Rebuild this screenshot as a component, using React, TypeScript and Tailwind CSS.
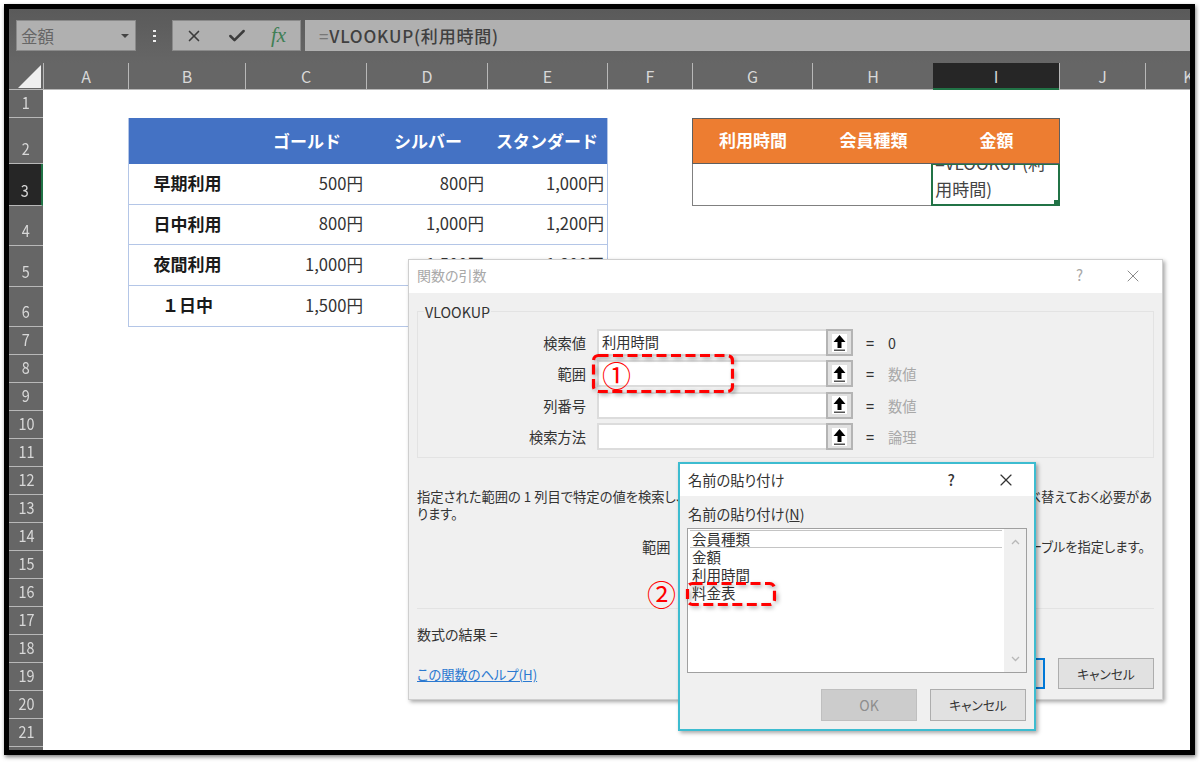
import { X, Check } from "lucide-react"

const jp = `font-['Noto_Sans_CJK_JP','Noto_Sans',sans-serif]`

const columns = [
  { name: "A", width: "w-[85px]" },
  { name: "B", width: "w-[117px]" },
  { name: "C", width: "w-[121px]" },
  { name: "D", width: "w-[121px]" },
  { name: "E", width: "w-[120px]" },
  { name: "F", width: "w-[85px]" },
  { name: "G", width: "w-[120px]" },
  { name: "H", width: "w-[121px]" },
  { name: "I", width: "w-[126px]" },
  { name: "J", width: "w-[86px]" },
  { name: "K", width: "w-[86px]" },
]

const rowHeights = [
  "h-[28px]", "h-[46px]", "h-[42px]", "h-[40px]", "h-[41px]", "h-[40px]",
  "h-[28px]", "h-[28px]", "h-[28px]", "h-[28px]", "h-[28px]", "h-[28px]", "h-[28px]", "h-[28px]",
  "h-[28px]", "h-[28px]", "h-[28px]", "h-[28px]", "h-[28px]", "h-[28px]", "h-[28px]", "h-[5px]",
]

const prices = [
  { label: "早期利用", values: ["500円", "800円", "1,000円"], height: "h-[41px]" },
  { label: "日中利用", values: ["800円", "1,000円", "1,200円"], height: "h-[40px]" },
  { label: "夜間利用", values: ["1,000円", "1,500円", "1,800円"], height: "h-[41px]" },
  { label: "１日中", values: ["1,500円", "1,800円", "2,000円"], height: "h-[40px]" },
]

const args = [
  { label: "検索値", value: "利用時間", result: "0", dim: false },
  { label: "範囲", value: "", result: "数値", dim: true },
  { label: "列番号", value: "", result: "数値", dim: true },
  { label: "検索方法", value: "", result: "論理", dim: true },
]

function RefButton() {
  return (
    <div className="flex h-[27px] w-[27px] shrink-0 items-center justify-center border-2 border-[#b4b4b4] bg-[#e1e1e1]">
      <svg width="15" height="18" viewBox="0 0 15 18">
        <rect width="15" height="18" fill="#fff" />
        <path d="M7.5 1 L13.5 8 H9.5 V14 H5.5 V8 H1.5 Z" fill="#000" />
        <rect x="2" y="15.5" width="11" height="1.5" fill="#555" />
      </svg>
    </div>
  )
}

function Callout({ className, width, height }: { className: string; width: number; height: number }) {
  return (
    <svg
      width={width}
      height={height}
      viewBox={`0 0 ${width} ${height}`}
      className={`absolute overflow-visible drop-shadow-[2px_2px_2px_rgba(0,0,0,0.35)] ${className}`}
    >
      <rect x="1.5" y="1.5" width={width - 3} height={height - 3} rx="5" fill="none" stroke="#ff0000" strokeWidth="3.2" strokeDasharray="10 4.5" />
    </svg>
  )
}

function FormulaBar() {
  return (
    <div className="flex h-[54px] shrink-0 items-start bg-gradient-to-b from-[#5a5a5a] to-[#666666] pt-[11px] pl-[7px]">
      <div className="flex h-[31px] w-[120px] items-center justify-between border border-[#8a8a8a] bg-[#b0b0b0] pt-px pr-[4px] pl-[4px] text-[16.5px] text-[#666666]">
        金額
        <span className="mr-[2px] h-0 w-0 border-x-[4.5px] border-t-[4.5px] border-x-transparent border-t-[#444444]" />
      </div>
      <div className="flex h-[31px] w-[36px] flex-col items-center justify-center gap-[3px]">
        <span className="h-[2px] w-[3px] bg-[#eeeeee]" />
        <span className="h-[2px] w-[3px] bg-[#eeeeee]" />
        <span className="h-[2px] w-[3px] bg-[#eeeeee]" />
      </div>
      <div className="flex h-[31px] w-[129px] items-center border border-[#8a8a8a] bg-[#b0b0b0] pl-[12px]">
        <X size={18} strokeWidth={2.2} className="text-[#3c3c3c]" />
        <Check size={20} strokeWidth={3} className="ml-[24px] text-[#3c3c3c]" />
        <span className="ml-[24px] font-['Liberation_Serif',serif] text-[21px] text-[#3f7f55] italic">fx</span>
      </div>
      <div className="ml-[4px] flex h-[31px] flex-1 items-center bg-[#b0b0b0] pl-[14px] text-[17px] font-medium tracking-[0.8px] text-[#404040]">
        <span className="font-normal text-[#777777]">=</span>VLOOKUP(利用時間)
      </div>
    </div>
  )
}

function ColumnHeaders() {
  return (
    <div className="flex h-[27px] shrink-0 bg-[#666666]">
      <div className="relative h-full w-[34px] shrink-0 border-b border-[#b8b8b8]">
        <svg width="34" height="26" viewBox="0 0 34 26" className="absolute top-0 left-0">
          <path d="M9 25 L32 2 V25 Z" fill="#efefef" />
        </svg>
      </div>
      {columns.map((col) =>
        col.name === "I" ? (
          <div key={col.name} className={`${col.width} flex shrink-0 items-center justify-center border-b-2 border-[#217346] bg-[#262626] text-[16px] text-[#d8d8d8]`}>
            {col.name}
          </div>
        ) : (
          <div key={col.name} className={`${col.width} flex shrink-0 items-center justify-center border-b border-l border-[#b8b8b8] text-[16px] text-[#d8d8d8]`}>
            {col.name}
          </div>
        ),
      )}
    </div>
  )
}

function RowHeaders() {
  return (
    <div className="flex w-[34px] shrink-0 flex-col overflow-hidden bg-[#666666]">
      {rowHeights.map((height, i) => (
        <div
          key={i}
          className={`${height} flex shrink-0 items-end justify-center border-b border-[#b8b8b8] pb-[3px] text-[17px] leading-[24px] text-[#d8d8d8] ${i === 2 ? "border-r-2 border-r-[#217346] bg-[#262626]" : ""}`}
        >
          {i < 21 && <span className="scale-x-[.85]">{i + 1}</span>}
        </div>
      ))}
    </div>
  )
}

function PriceTable() {
  return (
    <div className="w-[480px] shrink-0 border-x border-b border-[#b4c6e7] text-[16.6px] text-[#333333]">
      <div className="flex h-[46px] items-center bg-[#4472c4] text-[17px] font-semibold text-white">
        <div className="w-[117px]" />
        <div className="w-[121px] pr-[26px] text-right">ゴールド</div>
        <div className="w-[121px] pr-[26px] text-right">シルバー</div>
        <div className="flex-1 pr-[9px] text-right">スタンダード</div>
      </div>
      {prices.map((row, i) => (
        <div key={row.label} className={`flex items-center pb-[2px] ${row.height} ${i < 3 ? "border-b border-[#b4c6e7]" : ""}`}>
          <div className="w-[117px] text-center text-[17px] font-semibold text-[#1a1a1a]">{row.label}</div>
          <div className="w-[121px] pr-[4px] text-right">{row.values[0]}</div>
          <div className="w-[121px] pr-[4px] text-right">{row.values[1]}</div>
          <div className="flex-1 pr-[3px] text-right">{row.values[2]}</div>
        </div>
      ))}
    </div>
  )
}

function LookupTable() {
  return (
    <div className="w-[368px] shrink-0">
      <div className="relative z-10 flex h-[46px] items-center border border-[#5f5f5f] bg-[#ed7d31] pb-[2px] text-center text-[17px] font-semibold text-white">
        <div className="w-[120px]">利用時間</div>
        <div className="w-[121px]">会員種類</div>
        <div className="flex-1">金額</div>
      </div>
      <div className="flex h-[42px] border-l border-[#808080]">
        <div className="w-[239px] border-b border-[#808080]" />
        <div className="relative flex h-[43px] w-[129px] -translate-y-px items-end overflow-hidden border-2 border-[#217346] bg-white pb-[1px] pl-[2px] text-[17px] leading-[28px] text-[#444444]">
          用時間)
          <span className="absolute top-[-16px] left-[2px] whitespace-nowrap">=VLOOKUP(利</span>
          <span className="absolute right-0 bottom-0 h-[4px] w-[4px] bg-[#217346]" />
        </div>
      </div>
    </div>
  )
}

function FunctionDialog() {
  return (
    <div className="absolute top-[259px] left-[408px] flex h-[441px] w-[755px] flex-col border border-[#cfcfcf] bg-[#f0f0f0] text-[14.25px] text-[#333333] shadow-[2px_2px_4px_rgba(0,0,0,0.35)] [font-feature-settings:'palt']">
      <div className="flex h-[33px] shrink-0 items-center bg-white pr-[19px] pb-[2px] pl-[8px] text-[14px] text-[#a8a8a8]">
        <span className="flex-1">関数の引数</span>
        <span className="mr-[40px] text-[15px]">?</span>
        <X size={20} strokeWidth={1.2} className="text-[#8a8a8a]" />
      </div>
      <div className="flex flex-1 flex-col px-[8px]">
        <div className="mt-[18px] h-[147px] border border-[#e3e3e3]">
          <div className="-mt-[10px] ml-[6px] w-fit bg-[#f0f0f0] px-px leading-[20px]">VLOOKUP</div>
          <div className="mt-[7px] flex flex-col gap-[4.4px]">
            {args.map((arg) => (
              <div key={arg.label} className="flex h-[27px] items-center">
                <div className="w-[179px] pr-[11px] text-right">{arg.label}</div>
                <div className="flex h-full w-[229px] items-center border-2 border-r-0 border-[#dcdcdc] bg-white pb-px pl-[3px]">{arg.value}</div>
                <RefButton />
                <div className="ml-[13px] w-[22px] font-medium">=</div>
                <div className={arg.dim ? "text-[#a8a8a8]" : ""}>{arg.result}</div>
              </div>
            ))}
          </div>
        </div>
        <p className="mt-[30px] w-[736px] text-[13.3px] leading-[17px]">
          指定された範囲の 1 列目で特定の値を検索し、指定した列と同じ行にある値を返します。テーブルは昇順で並べ替えておく必要があります。
        </p>
        <div className="mt-[13px] flex h-[24px] items-center whitespace-nowrap">
          <span className="ml-[225px]">範囲</span>
          <span className="ml-auto pr-[9px] text-[13.3px]">検索値を含むテーブルを指定します。</span>
        </div>
        <div className="mt-[49px] h-px bg-[#e3e3e3]" />
        <div className="mt-[16px] text-[14px] leading-[18px]">数式の結果 =</div>
        <div className="mt-[15px] flex items-center justify-between">
          <a className="mt-[2px] text-[13.25px] text-[#2b79d0] underline">この関数のヘルプ(H)</a>
          <div className="flex gap-[13px] text-[12.75px]">
            <div className="flex h-[31px] w-[95px] items-center justify-center border-2 border-[#0078d7] bg-[#e1e1e1]">OK</div>
            <div className="flex h-[31px] w-[96px] items-center justify-center border border-[#adadad] bg-[#e1e1e1]">キャンセル</div>
          </div>
        </div>
      </div>
    </div>
  )
}

function PasteNameDialog() {
  return (
    <div className="absolute top-[462px] left-[678px] flex h-[269px] w-[358px] flex-col border-2 border-[#3dbcd0] bg-[#f0f0f0] text-[14.25px] text-[#333333] shadow-[2px_2px_4px_rgba(0,0,0,0.35)] [font-feature-settings:'palt']">
      <div className="flex h-[32px] shrink-0 items-center bg-white pr-[18px] pl-[8px]">
        <span className="flex-1">名前の貼り付け</span>
        <span className="mr-[41px] text-[15px] font-medium">?</span>
        <X size={20} strokeWidth={1.4} className="text-[#333333]" />
      </div>
      <div className="flex flex-1 flex-col px-[7px]">
        <div className="mt-[8px] pl-px leading-[20px]">名前の貼り付け(<span className="underline">N</span>)</div>
        <div className="mt-[4px] flex h-[145px] border border-[#a0a0a0] bg-white text-[14.5px] leading-[18px]">
          <div className="flex-1 px-[2px] pt-[1px]">
            <div className="border-y border-[#c4c4c4] pl-[2px] leading-[16px]">会員種類</div>
            <div className="pl-[2px]">金額</div>
            <div className="pl-[2px]">利用時間</div>
            <div className="pl-[2px]">料金表</div>
          </div>
          <div className="flex w-[22px] flex-col items-center justify-between bg-[#f0f0f0] py-[10px] text-[#b8b8b8]">
            <svg width="9" height="6" viewBox="0 0 9 6"><path d="M1 5 L4.5 1.5 L8 5" fill="none" stroke="currentColor" strokeWidth="1.3" /></svg>
            <svg width="9" height="6" viewBox="0 0 9 6"><path d="M1 1 L4.5 4.5 L8 1" fill="none" stroke="currentColor" strokeWidth="1.3" /></svg>
          </div>
        </div>
        <div className="mt-[16px] mr-[1px] flex justify-end gap-[13px] text-[12.75px]">
          <div className="flex h-[32px] w-[96px] items-center justify-center border border-[#bfbfbf] bg-[#cccccc] text-[14px] text-[#8e8e8e]">OK</div>
          <div className="flex h-[32px] w-[96px] items-center justify-center border border-[#adadad] bg-[#e1e1e1]">キャンセル</div>
        </div>
      </div>
    </div>
  )
}

export default function App() {
  return (
    <div className={`relative h-[762px] w-[1200px] overflow-hidden bg-white ${jp}`}>
      <div className="absolute top-[4px] left-[4px] flex h-[751px] w-[1191px] flex-col overflow-hidden border-[5px] border-black shadow-[1px_2px_4px_rgba(0,0,0,0.5)]">
        <FormulaBar />
        <ColumnHeaders />
        <div className="flex min-h-0 flex-1">
          <RowHeaders />
          <div className="flex flex-1 items-start gap-[84px] pt-[28px] pl-[85px]">
            <PriceTable />
            <LookupTable />
          </div>
        </div>
      </div>

      <FunctionDialog />
      <PasteNameDialog />

      {/* red callouts */}
      <Callout className="top-[354px] left-[592px]" width={142} height={39} />
      <div className="absolute top-[352px] left-[602px] text-[29px] leading-[44px] text-[#ff0000]">①</div>
      <Callout className="top-[582px] left-[686px]" width={90} height={24} />
      <div className="absolute top-[571px] left-[647px] text-[29px] leading-[44px] text-[#ff0000]">②</div>
    </div>
  )
}
